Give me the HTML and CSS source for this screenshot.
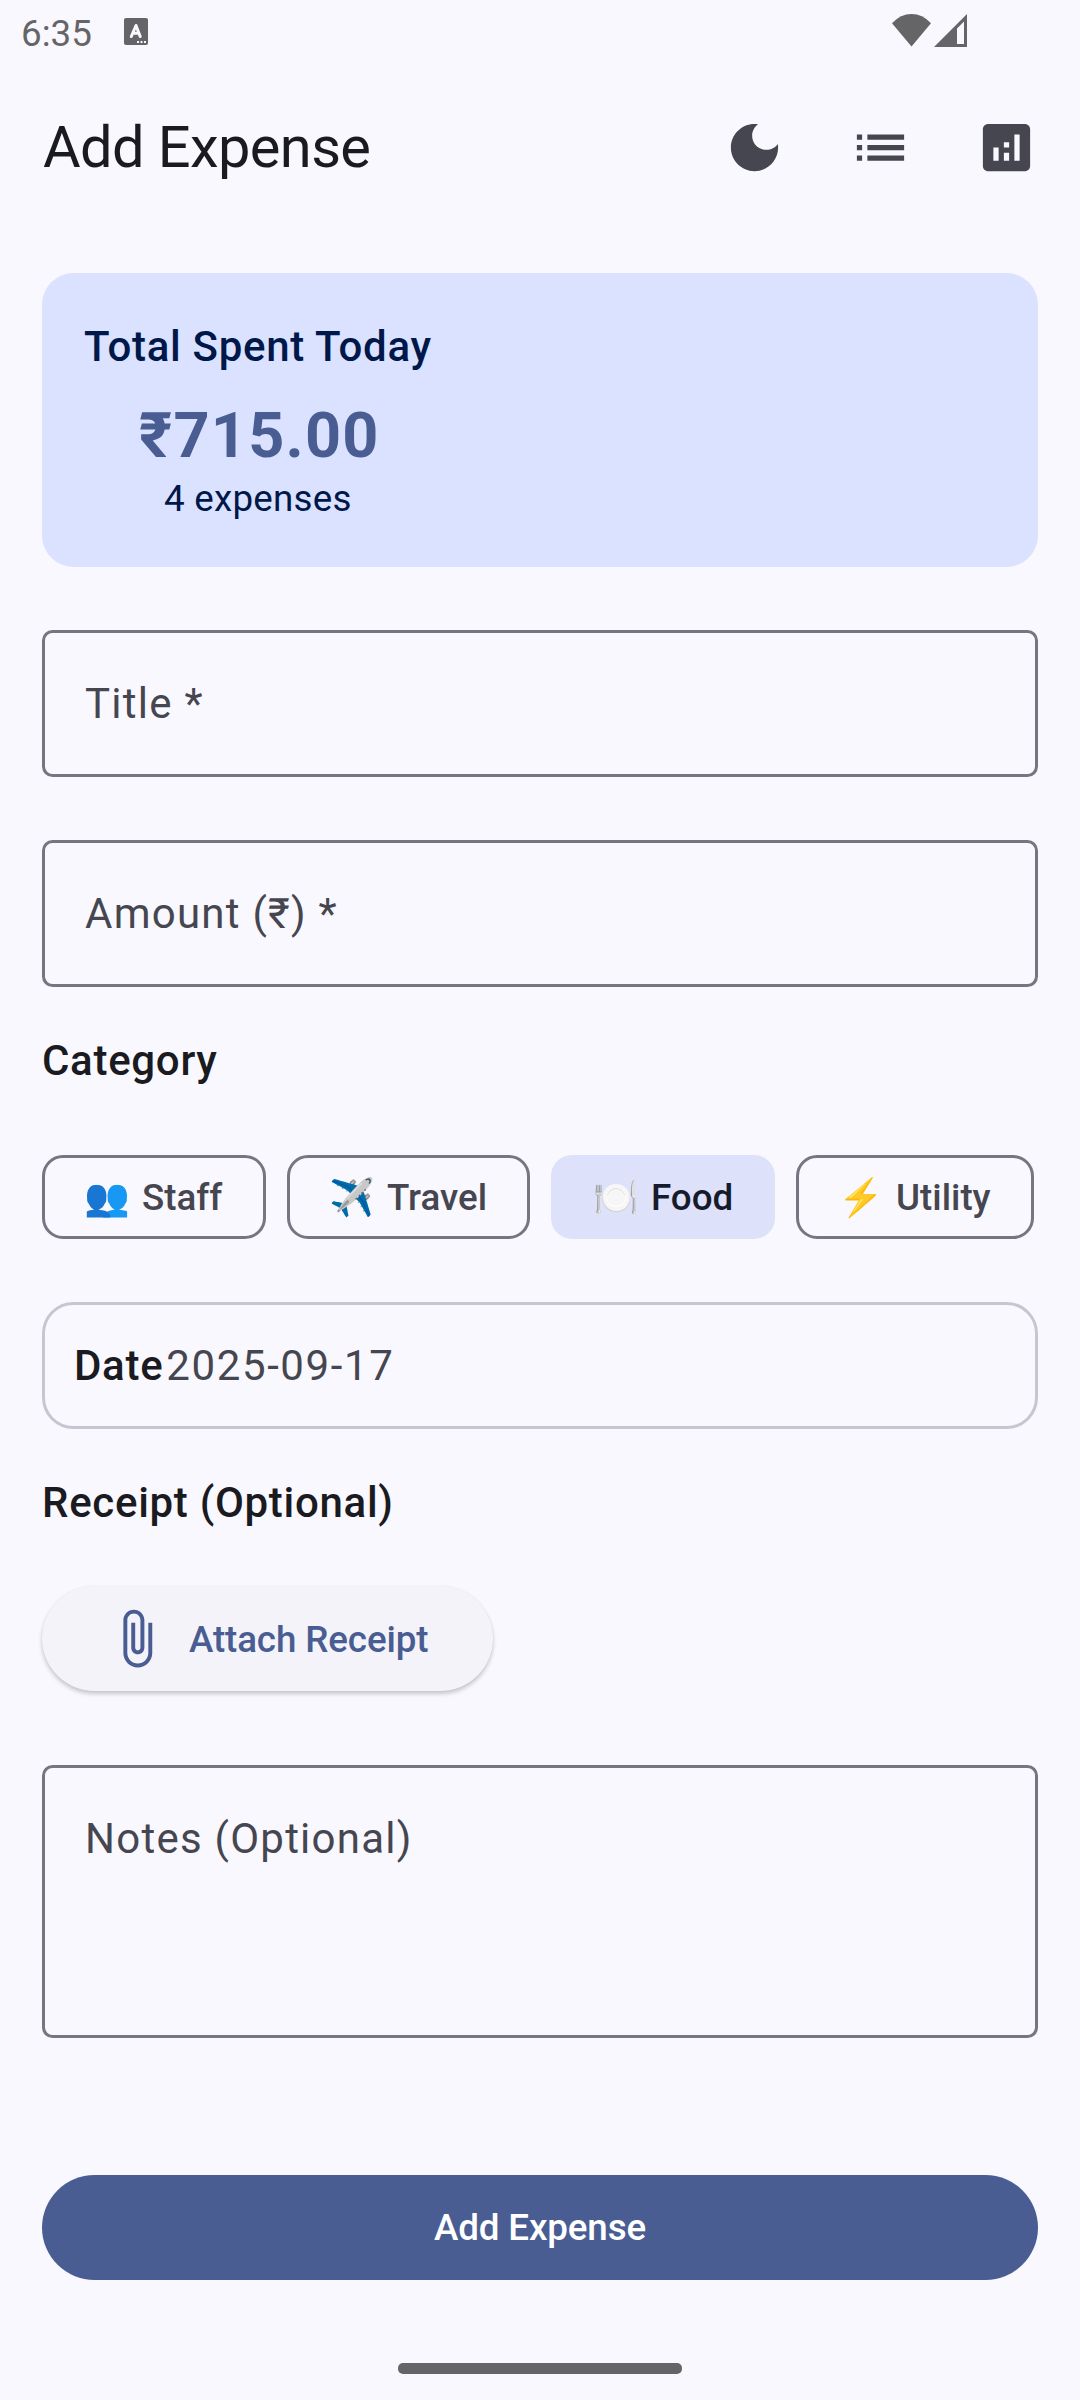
FILE: index.html
```html
<!DOCTYPE html>
<html lang="en">
<head>
<meta charset="utf-8">
<title>Add Expense</title>
<link rel="stylesheet" href="styles.css">
</head>
<body>
<div class="screen">
  <div class="status">
    <span class="time">6:35</span>
    <svg class="note" viewBox="0 0 24 27"><rect width="24" height="27" rx="2" fill="#656567"/><path d="M7.3 18.5 L12 7.5 L16.2 18.5 M9 15.2h6" fill="none" stroke="#faf8ff" stroke-width="3" stroke-linecap="round" stroke-linejoin="round"/><path d="M13 23h2v2h-2zM16.5 23h2v2h-2zM20 23h2v2h-2z" fill="#faf8ff"/></svg>
    <svg class="wifi" viewBox="0 0 39 33"><path d="M0 9.3Q8.500 0 19.500 0T39 9.300L19.500 32.500z" fill="#656567"/></svg>
    <svg class="signal" viewBox="0 0 33 33"><path fill-rule="evenodd" d="M0 33L33 0V33zM23 14.500V30h7V7.500z" fill="#656567"/></svg>
  </div>
  <header class="appbar">
    <h1>Add Expense</h1>
    <svg class="icon" viewBox="0 0 24 24"><path d="M12 3c-4.970 0-9 4.030-9 9s4.030 9 9 9 9-4.030 9-9c0-.46-.04-.92-.1-1.360-.98 1.370-2.580 2.260-4.400 2.260-2.980 0-5.400-2.420-5.400-5.400 0-1.810.89-3.420 2.260-4.400-.44-.06-.9-.1-1.360-.1z"/></svg>
    <svg class="icon" viewBox="0 0 24 24"><path d="M3 13h2v-2H3v2zm0 4h2v-2H3v2zm0-8h2V7H3v2zm4 4h14v-2H7v2zm0 4h14v-2H7v2zM7 7v2h14V7H7z"/></svg>
    <svg class="icon" viewBox="0 0 24 24"><path d="M19 3H5c-1.100 0-2 .9-2 2v14c0 1.100.9 2 2 2h14c1.100 0 2-.9 2-2V5c0-1.100-.9-2-2-2zM9 17H7v-5h2v5zm4 0h-2v-3h2v3zm0-5h-2v-2h2v2zm4 5h-2V7h2v10z"/></svg>
  </header>
  <main class="form">
    <section class="summary">
      <div class="summary-inner">
        <div class="title-medium">Total Spent Today</div>
        <div class="amount">₹715.00</div>
        <div class="count">4 expenses</div>
      </div>
    </section>
    <div class="field">Title *</div>
    <div class="field">Amount (₹) *</div>
    <h2 class="title-medium category">Category</h2>
    <div class="chips">
      <div class="chip staff"><span class="emoji">👥</span>Staff</div>
      <div class="chip travel"><span class="emoji">✈️</span>Travel</div>
      <div class="chip food selected"><span class="emoji">🍽️</span>Food</div>
      <div class="chip utility"><span class="emoji">⚡</span>Utility</div>
    </div>
    <div class="date"><span class="title-medium">Date</span><span class="date-value">2025-09-17</span></div>
    <h2 class="title-medium receipt">Receipt (Optional)</h2>
    <div class="attach">
      <svg class="icon" viewBox="0 0 24 24"><path d="M16.500 6v11.500c0 2.210-1.790 4-4 4s-4-1.790-4-4V5c0-1.380 1.120-2.500 2.500-2.500s2.500 1.120 2.500 2.500v10.500c0 .55-.45 1-1 1s-1-.45-1-1V6H10v9.500c0 1.380 1.120 2.500 2.500 2.500s2.500-1.120 2.500-2.500V5c0-2.210-1.790-4-4-4S7 2.790 7 5v12.500c0 3.040 2.460 5.500 5.500 5.500s5.500-2.460 5.500-5.500V6h-1.500z"/></svg>
      <span class="attach-label">Attach Receipt</span>
    </div>
    <div class="field notes">Notes (Optional)</div>
    <div class="submit">Add Expense</div>
  </main>
  <div class="handle"></div>
</div>
</body>
</html>
```
FILE: styles.css
```css
* { box-sizing: border-box; }
body { margin: 0; background: #faf8ff; }
.screen {
  width: 1080px;
  height: 2400px;
  display: flex;
  flex-direction: column;
  background: #faf8ff;
  color: #1a1b21;
  font-family: Roboto, "Noto Sans", "Noto Color Emoji", sans-serif;
  white-space: nowrap;
  overflow: hidden;
}
h1, h2 { margin: 0; }
svg { display: block; flex: none; }

.status { display: flex; height: 63px; padding: 0 113px 0 21px; }
.time { width: 103px; font-size: 36.75px; line-height: 67px; color: #656567; }
.note { width: 24px; height: 27px; margin-top: 18px; }
.wifi { width: 39px; height: 33px; margin: 14px 3px 0 auto; }
.signal { width: 33px; height: 33px; margin-top: 14px; }

.appbar {
  display: flex;
  align-items: center;
  gap: 63px;
  height: 168px;
  padding: 0 42px 0 43px;
}
h1 { flex: 1; font-size: 57.75px; font-weight: 400; line-height: 74px; letter-spacing: -.6px; }
.icon { width: 63px; height: 63px; fill: #45464f; }

.form { display: flex; flex-direction: column; padding: 42px 42px 0; }
.title-medium {
  font-size: 42px;
  font-weight: 500;
  line-height: 63px;
  letter-spacing: .7px;
}
.summary {
  height: 294px;
  padding: 42px;
  border-radius: 31.5px;
  background: #dae2ff;
  color: #001849;
}
.summary-inner {
  display: flex;
  flex-direction: column;
  align-items: center;
  width: fit-content;
}
.amount {
  padding: 21px 0 0 3px;
  font-size: 63px;
  font-weight: 700;
  line-height: 74px;
  letter-spacing: 1.2px;
  color: #495d92;
}
.count { font-size: 36.75px; line-height: 51px; letter-spacing: .25px; }

.field {
  height: 147px;
  margin-top: 63px;
  padding: 0 40px;
  border: 3px solid #757680;
  border-radius: 10.5px;
  font-size: 42px;
  line-height: 141px;
  letter-spacing: 1.25px;
  color: #45464f;
}
.category { margin-top: 42px; }
.chips { display: flex; gap: 21px; height: 84px; margin-top: 63px; }
.chip {
  display: flex;
  align-items: center;
  padding-left: 39px;
  border: 3px solid #757680;
  border-radius: 21px;
  font-size: 36.75px;
  font-weight: 500;
  color: #45464f;
}
.staff { width: 224px; }
.travel { width: 243px; }
.food { width: 224px; }
.utility { width: 238px; }
.selected { border-color: #dde1f9; background: #dde1f9; color: #151b2c; }
.emoji { width: 58px; }

.date {
  display: flex;
  align-items: center;
  height: 127px;
  margin-top: 63px;
  padding: 0 29px;
  border: 3px solid #c5c6d0;
  border-radius: 31.5px;
}
.date-value {
  margin-left: 3px;
  font-size: 42px;
  line-height: 63px;
  letter-spacing: 1.6px;
  color: #45464f;
}
.receipt { margin-top: 42px; }
.attach {
  display: flex;
  align-items: center;
  gap: 21px;
  width: 451px;
  height: 105px;
  margin-top: 52px;
  padding: 0 63px;
  border-radius: 52.5px;
  background: #f4f3fa;
  box-shadow: 0 3px 4px rgba(0, 0, 0, .2), 0 0 2px rgba(0, 0, 0, .06);
  color: #495d92;
  font-size: 36.75px;
  font-weight: 500;
  letter-spacing: -.12px;
}
.attach .icon { fill: #495d92; }
.attach-label { padding-top: 2px; }
.notes { height: 273px; margin-top: 74px; padding-top: 39px; line-height: 63px; }
.submit {
  height: 105px;
  margin-top: 137px;
  border-radius: 52.5px;
  background: #495d92;
  color: #fff;
  font-size: 36.75px;
  font-weight: 500;
  line-height: 105px;
  letter-spacing: -.15px;
  text-align: center;
}
.handle {
  width: 284px;
  height: 11px;
  margin: auto auto 26px;
  border-radius: 5px;
  background: #656567;
}
```
